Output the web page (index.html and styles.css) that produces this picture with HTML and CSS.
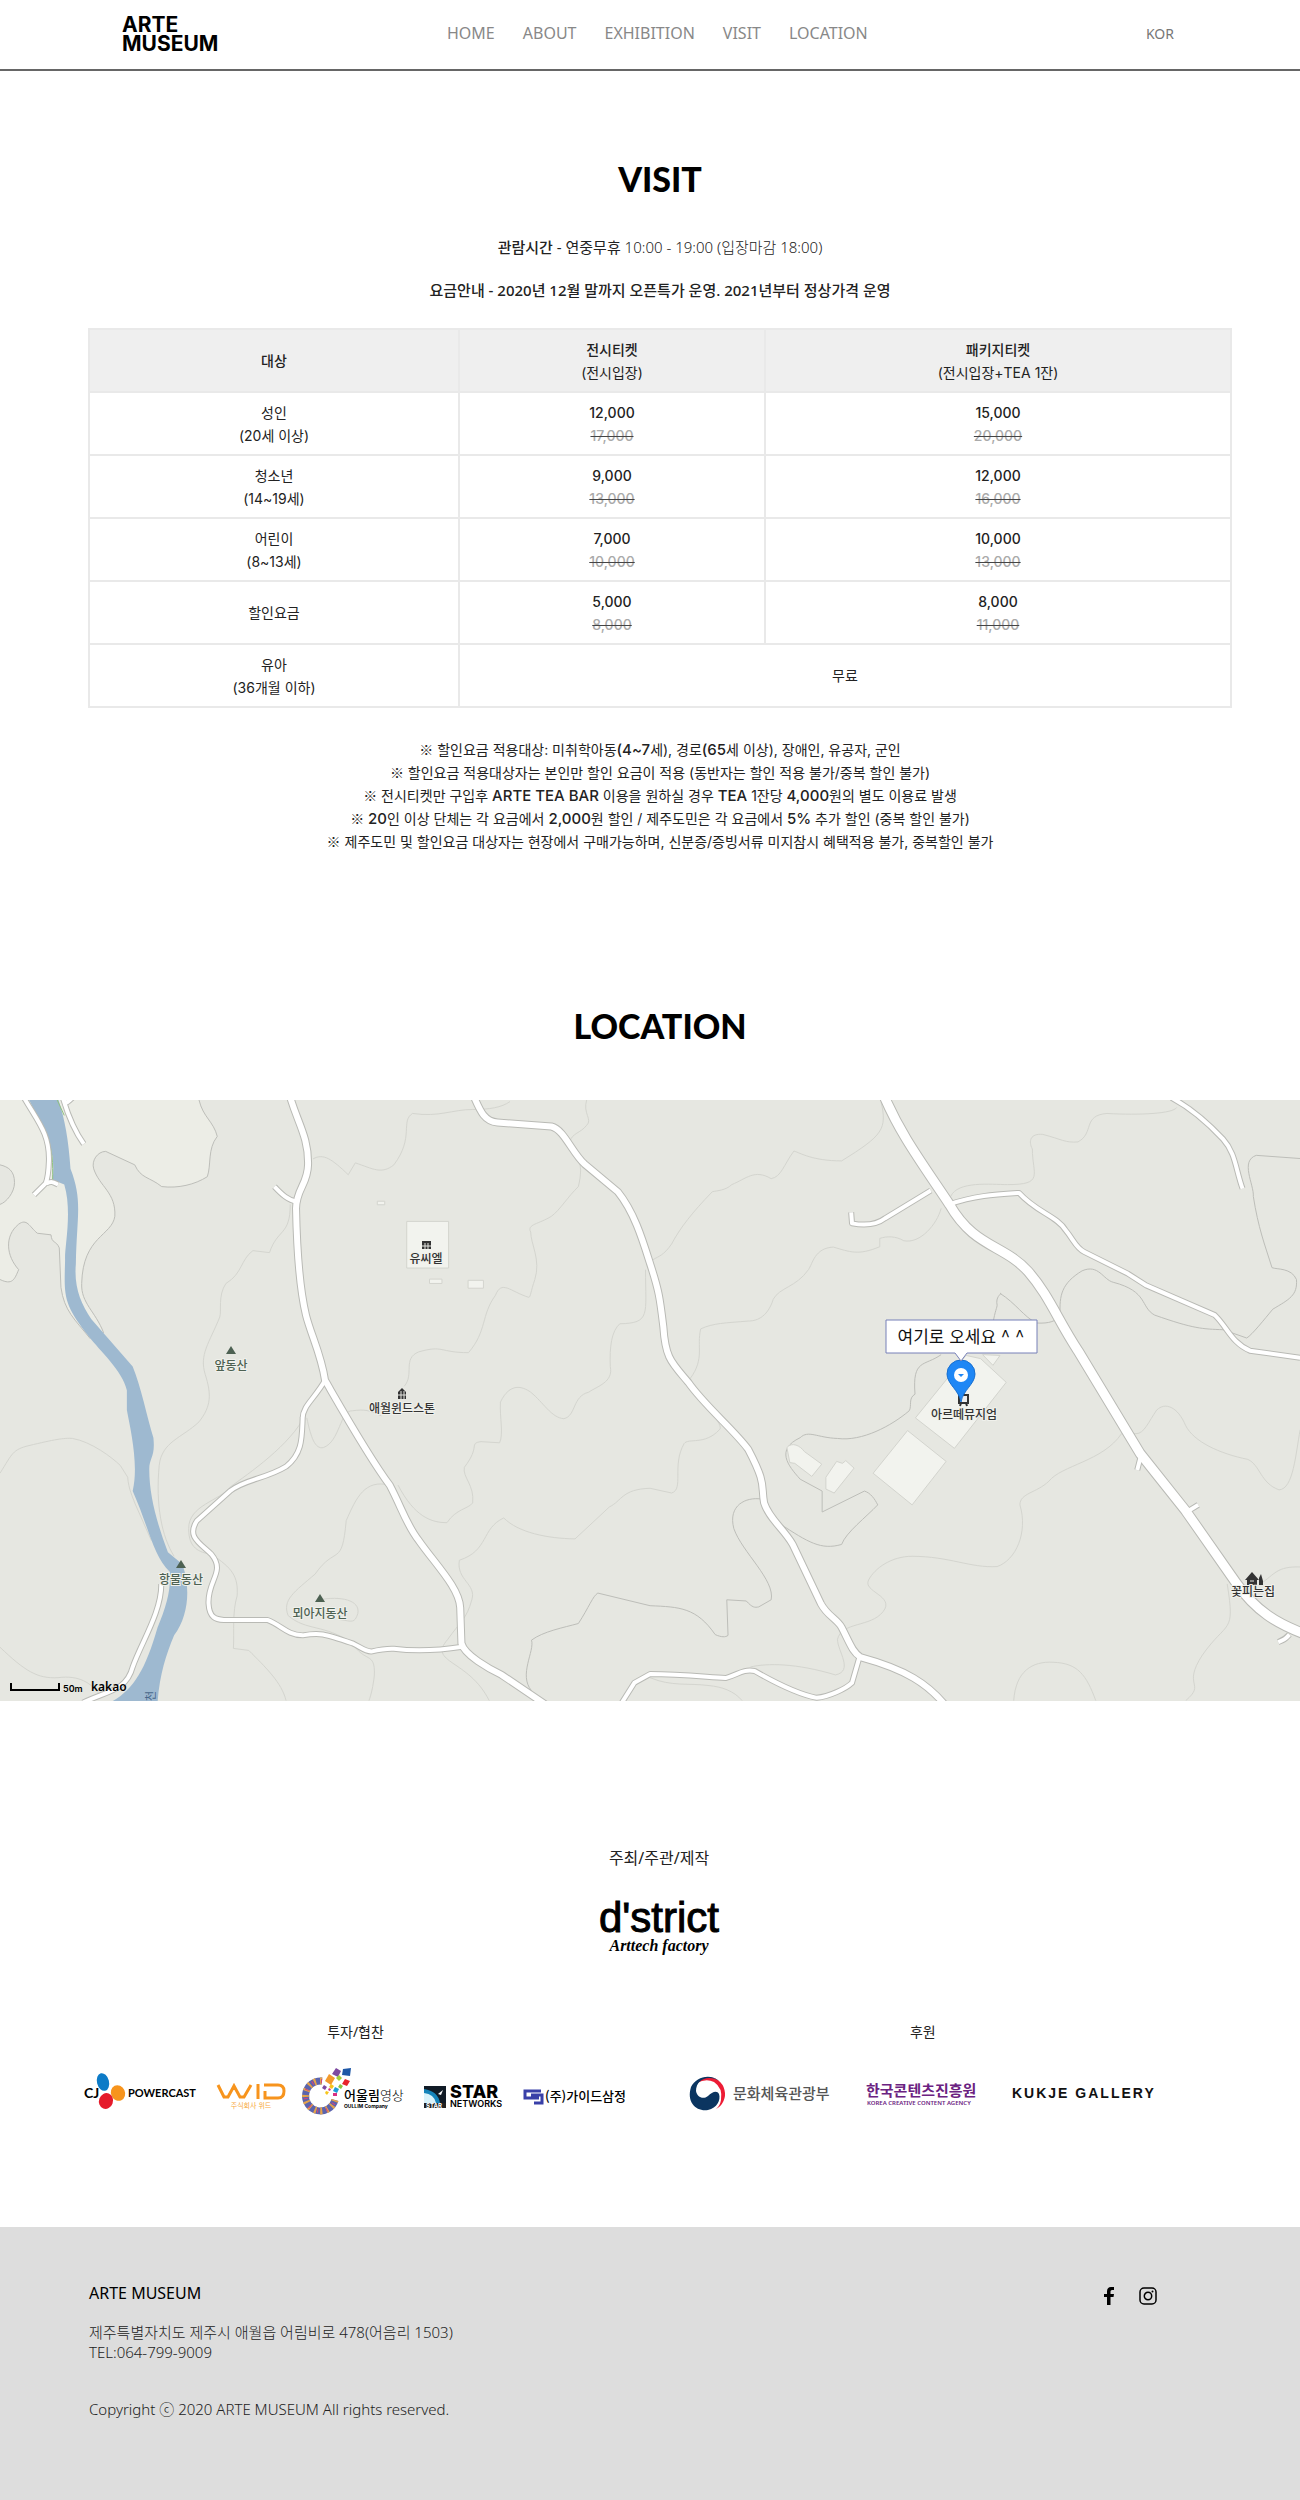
FILE: index.html
```html
<!DOCTYPE html>
<html lang="ko">
<head>
<meta charset="utf-8">
<meta name="viewport" content="width=device-width, initial-scale=1">
<title>ARTE MUSEUM</title>
<link rel="stylesheet" href="styles.css">
</head>
<body>
<header class="site-header">
  <a class="logo" href="#">ARTE<br>MUSEUM</a>
  <nav class="nav">
    <a href="#">HOME</a>
    <a href="#">ABOUT</a>
    <a href="#">EXHIBITION</a>
    <a href="#visit">VISIT</a>
    <a href="#location">LOCATION</a>
  </nav>
  <a class="lang" href="#">KOR</a>
</header>

<main>
  <section class="visit" id="visit">
    <h2 class="title">VISIT</h2>
    <p class="hours"><strong>관람시간</strong> - 연중무휴 <span class="light">10:00 - 19:00 (입장마감 18:00)</span></p>
    <p class="fee">요금안내 - 2020년 12월 말까지 오픈특가 운영. 2021년부터 정상가격 운영</p>
    <table class="prices">
      <colgroup><col class="col-who"><col class="col-ticket"><col></colgroup>
      <thead>
        <tr><th scope="col">대상</th><th scope="col">전시티켓<br><span class="sub">(전시입장)</span></th><th scope="col">패키지티켓<br><span class="sub">(전시입장+TEA 1잔)</span></th></tr>
      </thead>
      <tbody>
        <tr><td>성인<br>(20세 이상)</td><td>12,000<br><del>17,000</del></td><td>15,000<br><del>20,000</del></td></tr>
        <tr><td>청소년<br>(14~19세)</td><td>9,000<br><del>13,000</del></td><td>12,000<br><del>16,000</del></td></tr>
        <tr><td>어린이<br>(8~13세)</td><td>7,000<br><del>10,000</del></td><td>10,000<br><del>13,000</del></td></tr>
        <tr><td>할인요금</td><td>5,000<br><del>8,000</del></td><td>8,000<br><del>11,000</del></td></tr>
        <tr><td>유아<br>(36개월 이하)</td><td class="free" colspan="2">무료</td></tr>
      </tbody>
    </table>
    <div class="notes">
      <p><span class="mark">※</span> 할인요금 적용대상: 미취학아동<b>(4~7</b>세), 경로<b>(65</b>세 이상), 장애인, 유공자, 군인</p>
      <p><span class="mark">※</span> 할인요금 적용대상자는 본인만 할인 요금이 적용 (동반자는 할인 적용 불가/중복 할인 불가)</p>
      <p><span class="mark">※</span> 전시티켓만 구입후 <b>ARTE TEA BAR</b> 이용을 원하실 경우 <b>TEA</b> 1잔당 <b>4,000</b>원의 별도 이용료 발생</p>
      <p><span class="mark">※</span> <b>20</b>인 이상 단체는 각 요금에서 <b>2,000</b>원 할인 / 제주도민은 각 요금에서 <b>5%</b> 추가 할인 (중복 할인 불가)</p>
      <p><span class="mark">※</span> 제주도민 및 할인요금 대상자는 현장에서 구매가능하며, 신분증/증빙서류 미지참시 혜택적용 불가, 중복할인 불가</p>
    </div>
  </section>

  <section class="location" id="location">
    <h2 class="title">LOCATION</h2>
    <svg class="map" viewBox="0 0 1300 601" preserveAspectRatio="xMidYMid slice" role="img" aria-label="아르떼뮤지엄 지도">
      <defs>
        <g id="roads-wide">
          <path d="M695 0C712 75 745 115 743 190C742 240 715 250 714 300C716 400 722 500 738 570C750 620 775 670 784 735C820 800 890 930 940 1000C970 1060 980 1100 1010 1140C1050 1200 1108 1260 1110 1310L1113 1400C1120 1430 1180 1465 1210 1480L1330 1565"/>
          <path d="M1140 10C1160 60 1170 80 1200 83L1330 93C1360 100 1380 160 1410 188L1490 258C1530 310 1550 380 1568 440C1590 510 1592 530 1600 600C1605 680 1620 690 1660 740C1700 800 1770 860 1805 910C1850 1000 1835 1000 1843 1045C1855 1085 1890 1110 1912 1150L1980 1300C1995 1330 2020 1340 2030 1360C2050 1400 2055 1420 2075 1435C2180 1465 2240 1500 2290 1570"/>
        </g>
        <g id="roads-main">
          <path d="M2130 10C2170 110 2220 180 2290 290C2350 400 2420 390 2480 460C2530 520 2550 580 2600 660L2750 920L2860 1065L2980 1245C3030 1320 3080 1350 3150 1378"/>
        </g>
        <g id="roads-thin">
          <path d="M55 15C90 80 120 110 118 180C117 210 115 225 110 237L82 266M112 237C125 230 130 235 140 240"/>
          <path d="M150 15C165 70 180 105 202 137M152 35C160 35 165 30 175 20"/>
          <path d="M662 245C680 265 695 280 716 283"/>
          <path d="M784 735C760 780 730 800 730 830C728 880 730 920 690 953C640 985 590 985 555 1015L475 1090C450 1130 480 1145 510 1175C545 1220 500 1240 503 1300C505 1335 520 1340 540 1341H645C680 1355 690 1378 730 1380C770 1372 780 1375 850 1400C870 1410 880 1420 895 1421C920 1415 930 1413 950 1414C1010 1422 1060 1418 1115 1409"/>
          <path d="M389 1250C390 1320 340 1400 320 1460C305 1520 260 1520 200 1550"/>
          <path d="M1500 1550L1530 1500L1568 1478C1640 1478 1700 1485 1750 1488C1780 1480 1790 1465 1820 1470C1870 1500 1930 1530 1970 1538C2000 1535 2040 1515 2055 1500L2073 1435"/>
          <path d="M2245 255L2135 325C2110 345 2080 343 2055 338L2053 310"/>
          <path d="M2290 290C2350 268 2400 265 2458 261C2500 310 2550 320 2570 355C2590 380 2595 400 2615 410L2720 465L2765 495L2930 570C2960 600 2970 640 3015 660L3136 678"/>
          <path d="M2825 20C2870 45 2910 80 2950 125C2980 160 2980 200 2997 250"/>
          <path d="M2752 925L2743 962M2862 1068L2890 1050M3110 1378C3100 1390 3095 1392 3083 1397"/>
        </g>
      </defs>
      <rect class="land" width="1300" height="601"/>
      <g transform="scale(.4146 .3954) translate(0 -26)">
        <path class="field" d="M0 26H480C490 70 515 80 524 118C500 150 510 190 500 220C470 240 430 250 390 245C360 220 340 225 325 190L255 156C235 156 220 180 226 200C240 245 280 260 277 320C270 370 200 370 197 490C195 540 230 560 250 615L300 690L220 630C180 580 155 560 147 500L143 400C135 380 125 390 123 367L90 363C70 345 65 325 45 340C10 370 15 420 45 455C35 480 30 495 0 480V290C15 285 35 260 35 235C35 205 20 195 0 190Z"/>
        <g class="edge">
          <path d="M480 26C490 70 515 80 524 118C500 150 510 190 500 220C470 240 430 250 390 245C360 220 340 225 325 190L255 156C235 156 220 180 226 200C240 245 280 260 277 320C270 370 200 370 197 490C195 540 230 560 250 615M218 630C180 580 155 560 147 500L143 400C135 380 125 390 123 367L90 363C70 345 65 325 45 340C10 370 15 420 45 455C35 480 30 495 0 480M0 290C15 285 35 260 35 235C35 205 20 195 0 190"/>
          <path d="M1282 1520C1250 1480 1290 1420 1282 1392C1310 1370 1360 1360 1395 1350C1420 1310 1430 1280 1442 1273L1568 1305C1640 1308 1680 1310 1725 1378C1740 1385 1750 1385 1756 1380L1753 1290L1800 1293C1815 1310 1820 1310 1830 1308L1860 1290C1870 1240 1790 1170 1770 1110C1755 1050 1800 1030 1835 1035"/>
          <path d="M2395 590C2400 560 2405 550 2405 545C2400 520 2420 515 2412 515C2450 540 2470 575 2500 590C2530 592 2550 585 2557 570C2555 520 2560 490 2610 458C2650 440 2660 480 2685 487C2770 510 2750 550 2785 570C2880 605 2900 605 2950 607L3007 628C3020 620 3050 580 3070 555C3110 530 3130 520 3127 480C3115 450 3080 455 3068 450C3050 390 3035 350 3023 270C3025 240 2990 180 3030 166L3136 174"/>
          <path d="M2270 670C2230 700 2200 680 2207 770C2190 780 2200 800 2193 812C2150 850 2080 890 2020 882C1970 880 1950 860 1930 880C1870 910 1900 950 1930 985L1983 1015V1068L2085 1015C2100 1020 2110 1035 2117 1050C2090 1080 2040 1120 2030 1150C1980 1165 1950 1145 1880 1097"/>
        </g>
        <g class="contour">
          <path d="M755 175C780 160 800 175 840 215L857 185C900 200 920 215 950 190C1000 120 965 80 995 60C1060 70 1090 50 1140 50C1180 50 1210 45 1230 30M1415 26C1405 60 1430 75 1415 90C1400 110 1380 110 1375 130C1390 170 1410 180 1395 245C1370 270 1350 305 1330 320C1300 340 1270 340 1280 360C1280 390 1305 430 1290 480C1280 510 1280 525 1275 525C1230 510 1210 480 1195 520C1160 570 1175 610 1130 665C1060 665 1070 645 1010 663C970 680 1000 720 975 750"/>
          <path d="M700 290C700 370 670 350 650 412L610 407C580 430 585 465 545 490C525 520 535 560 530 575C505 640 480 670 495 720C510 770 510 800 480 840C440 880 390 890 384 950C375 1050 390 1130 420 1180M738 820C700 900 600 970 555 1005C530 1040 455 1050 455 1110C455 1160 480 1170 510 1175C560 1210 575 1230 572 1280C560 1320 565 1370 563 1413L600 1418C640 1460 680 1500 690 1545"/>
          <path d="M740 830C750 880 760 910 780 905C820 890 820 810 850 812C880 808 890 810 920 825M960 1000C1000 1080 1040 1095 1078 1095C1100 1060 1130 1060 1140 1045C1145 1000 1115 980 1120 955C1160 900 1130 895 1160 890L1205 893C1215 870 1205 830 1207 790C1230 740 1260 750 1280 765C1310 790 1330 830 1360 832C1390 825 1380 775 1420 765C1440 750 1480 740 1472 700C1470 650 1475 610 1495 592C1570 590 1557 570 1557 455"/>
          <path d="M0 970C30 920 30 910 70 900C130 885 155 880 175 882C220 890 270 930 290 950L308 980C310 1010 320 1030 325 1045L365 1140M0 1410C60 1470 90 1490 140 1487C190 1480 220 1500 240 1530"/>
          <path d="M940 1000C880 985 860 1030 835 1090C825 1210 810 1150 760 1225C710 1270 680 1290 695 1330C740 1370 780 1350 850 1400C880 1450 905 1420 903 1480C900 1510 895 1530 890 1545M770 1290C820 1280 870 1290 863 1325C855 1350 850 1345 820 1340"/>
          <path d="M1568 1008C1500 1010 1500 1040 1470 1055L1387 1136C1320 1135 1250 1120 1215 1083C1160 1110 1180 1165 1108 1190C1100 1240 1150 1250 1138 1290C1125 1340 1110 1345 1080 1390C1030 1450 1130 1440 1180 1545"/>
          <path d="M2125 30C2140 100 2130 115 2030 180C1960 180 1930 160 1915 155C1890 190 1885 220 1860 225C1820 200 1800 225 1765 240C1750 255 1730 255 1718 258C1670 310 1640 350 1620 390C1600 420 1590 420 1575 430M2270 300C2260 340 2220 390 2180 382C2160 370 2140 370 2122 376V397C2070 420 2050 410 2010 398C1965 400 1960 440 1950 455C1920 500 1880 500 1865 530C1850 580 1820 585 1805 585C1750 590 1720 590 1690 605C1680 650 1700 680 1665 730C1690 790 1750 850 1735 860C1700 900 1660 880 1650 895C1620 950 1650 1010 1620 1020L1568 1008"/>
          <path d="M2293 270C2310 230 2390 240 2430 240C2520 240 2490 215 2490 150C2480 130 2485 110 2515 113C2560 125 2570 135 2600 132C2640 110 2610 65 2670 60C2750 65 2830 60 2838 45"/>
          <path d="M3136 860C3125 920 3120 1010 3085 1012C3040 995 3040 950 3010 935C2940 920 2880 890 2860 850C2840 800 2810 790 2790 810C2770 840 2760 870 2740 870L2705 870C2660 940 2560 950 2530 990C2500 1020 2460 1020 2460 1050C2480 1120 2450 1190 2405 1206C2340 1210 2290 1180 2200 1180C2150 1180 2110 1210 2095 1240C2080 1270 2160 1280 2130 1320C2100 1360 2030 1345 2020 1390C2020 1420 2060 1470 2015 1480C1920 1450 1850 1450 1810 1460M3136 1207C3080 1205 3075 1225 3040 1250M2960 1250C2980 1380 2960 1340 2900 1430C2850 1510 2910 1500 2860 1545M2445 1545C2450 1470 2490 1445 2540 1448C2600 1450 2620 1480 2643 1545M1568 1487C1620 1510 1660 1500 1710 1507C1740 1510 1770 1520 1790 1545"/>
        </g>
        <path class="water" d="M65 15H138C155 70 165 120 170 200C200 280 185 320 183 440C178 500 195 540 220 580L320 700C340 750 355 830 370 880C375 930 360 930 360 960C360 1030 380 1100 405 1170L440 1200C460 1260 455 1330 420 1380C400 1430 385 1480 380 1550H265C320 1520 350 1470 380 1360C400 1310 412 1270 410 1220C370 1180 360 1110 320 1015C335 950 315 860 306 810V760C295 710 240 660 215 625C150 540 155 520 157 430C155 400 175 310 155 240L127 228C130 190 130 160 110 110Z"/>
        <path class="bank" d="M63 22L105 100C130 150 127 190 127 228M138 26L155 65"/>
        <g class="building">
          <path d="M981 333H1082V451H981ZM910 282H928V291H910ZM1036 479H1066V490H1036ZM1129 482H1166V502H1129ZM2365 680L2427 740L2302 907L2208 830L2330 672ZM2189 862L2282 940L2200 1050L2106 970ZM2370 670L2395 697L2412 672ZM1898 905C1910 890 1930 900 1940 915L1982 947L1958 978L1917 945L1905 943ZM1992 980L2018 940L2032 945L2040 938L2060 957L2012 1020L1992 1010Z"/>
        </g>
        <use class="casing thin" href="#roads-thin"/>
        <use class="casing wide" href="#roads-wide"/>
        <use class="casing main" href="#roads-main"/>
        <use class="road thin" href="#roads-thin"/>
        <use class="road wide" href="#roads-wide"/>
        <use class="road main" href="#roads-main"/>
      </g>
      <g class="hill">
        <path d="M231 246l-5 8h10ZM181 460l-5 8h10ZM320 494l-5 8h10Z"/>
        <text x="231" y="270">앞동산</text>
        <text x="181" y="484">항물동산</text>
        <text x="320" y="518">뫼아지동산</text>
      </g>
      <g class="place">
        <path d="M422 141h9v8h-9ZM398 299v-7l4-4l4 4v7ZM1245 480l7-8l7 8h-2v5h-10v-5ZM1259 485v-7l2-4l2 7v4Z"/>
        <path class="panes" d="M425 143v6M428 143v6M422 146h9M401 291v8M404 291v8M398 295h8M1250 481h4"/>
        <text x="426" y="163">유씨엘</text>
        <text x="402" y="313">애월윈드스톤</text>
        <text x="964" y="319">아르떼뮤지엄</text>
        <text x="1253" y="496">꽃피는집</text>
      </g>
      <path class="museum-icon" d="M959 295h9v8h-9ZM961 303l-1 3M966 303l1 3"/>
      <path class="pin" d="M961 302C959 290 947 284 947 274A14 14 0 0 1 975 274C975 284 963 290 961 302Z"/>
      <circle class="pin-hole" cx="961" cy="275" r="7"/>
      <path class="pin-mark" d="M958 274h6l-3 3Z"/>
      <path class="callout" d="M886 220H1037V253H967L961 261L955 253H886Z"/>
      <text class="callout-text" x="961" y="243">여기로 오세요 ^ ^</text>
      <path class="scale" d="M11 583V590H59V583"/>
      <text class="scale-text" x="63" y="592">50m</text>
      <text class="kakao" x="91" y="591">kakao</text>
      <text class="stream" x="155" y="601" transform="rotate(-90 155 601)">천</text>
    </svg>
  </section>

  <section class="partners">
    <p class="host-label">주최/주관/제작</p>
    <p class="host-name">d'strict</p>
    <p class="host-script">Arttech factory</p>
    <div class="partner-groups">
      <div class="group">
        <h3>투자/협찬</h3>
        <div class="logos logos-invest">
          <svg width="112" height="44" role="img" aria-label="CJ POWERCAST">
            <ellipse cx="18" cy="15" rx="6" ry="9" fill="#0d7bc7" transform="rotate(-14 18 15)"/>
            <ellipse cx="33" cy="26" rx="7" ry="8" fill="#f7941d" transform="rotate(-25 33 26)"/>
            <ellipse cx="21" cy="34" rx="7" ry="8" fill="#e51b2b" transform="rotate(20 21 34)"/>
            <text class="cj" x="-1" y="31">CJ</text><text class="powercast" x="43" y="30">POWERCAST</text>
          </svg>
          <svg width="68" height="44" role="img" aria-label="WID 주식회사 위드">
            <path d="M1 18L7 30H11L17 19L23 30H27L34 18M41 17V32M47 18H61Q67 18 67 24Q67 31 61 31H48V24" fill="none" stroke="#f7941d" stroke-width="3"/>
            <text class="wid" x="34" y="41">주식회사 위드</text>
          </svg>
          <svg width="99" height="44" role="img" aria-label="어울림영상">
            <path d="M17 14A15 15 0 1 0 30 33" fill="none" stroke="#5b64ad" stroke-width="7"/>
            <path d="M17 14A15 15 0 1 0 30 33" fill="none" stroke="#e5a34a" stroke-width="7" stroke-dasharray="2 4"/>
            <path d="M17 14A15 15 0 1 0 30 33" fill="none" stroke="#d2437c" stroke-width="4" stroke-dasharray="1 8"/>
            <path d="M24 7l6 4l-4 7l-6-4Z" fill="#f39a2c"/><path d="M31 1l5 3l-3 6l-6-3Z" fill="#7d4aa0"/><path d="M38 2l8-1l-1 8l-8-1Z" fill="#1f58a7"/><path d="M34 8l3 3l-3 3l-3-3Z" fill="#a4ce39"/><path d="M40 12l5 2l-3 5l-5-2Z" fill="#e8242c"/><path d="M19 18l3 2l-2 3l-3-2Z" fill="#7d4aa0"/><path d="M26 17l3 2l-2 3l-3-2ZM21 24l3 1l-2 3l-2-2Z" fill="#f6c51c"/><path d="M30 20l4 2l-2 4l-4-2Z" fill="#1b9dd9"/><path d="M35 17l3 2l-2 3l-3-2Z" fill="#8bc53f"/><path d="M24 21l2 1l-1 2l-2-1ZM28 26h4v3h-4Z" fill="#d83083"/>
            <text class="oullim" x="39" y="33">어울림<tspan class="thin-text">영상</tspan></text><text class="tiny" x="39" y="41">OULLIM Company</text>
          </svg>
          <svg width="79" height="44" role="img" aria-label="STAR NETWORKS">
            <rect y="19" width="22" height="22" fill="#111b26"/><path d="M0 22Q14 24 16 36H0Z" fill="#1684ba"/><path d="M0 26Q10 27 12 36H0Z" fill="#d9f2fa"/><path d="M14 27l5-4l-2 5Z" fill="#fff"/><rect y="36" width="22" height="5" fill="#222"/><text class="star-mini" x="2" y="41">STAR</text>
            <text class="star" x="26" y="31">STAR</text><text class="networks" x="26" y="40">NETWORKS</text>
          </svg>
          <svg width="103" height="44" role="img" aria-label="(주)가이드삼정">
            <path d="M18 24H2V31H16M8 28H19V36H11" fill="none" stroke="#3940a8" stroke-width="3"/>
            <text class="guide" x="22" y="34">(주)가이드삼정</text>
          </svg>
        </div>
      </div>
      <div class="group">
        <h3>후원</h3>
        <div class="logos logos-support">
          <svg width="142" height="44" role="img" aria-label="문화체육관광부">
            <path d="M26 42A17 17 0 0 0 18 10Q11 10 7 16Q16 11 24 15Q33 21 31 33Q30 39 26 42Z" fill="#ed1c35"/>
            <path d="M29 14C20 6 6 10 1 20C-4 36 7 45 18 43C27 41 31 33 29 27C27 23 22 25 18 29C13 33 7 30 6 24C6 16 12 11 19 11Q25 11 29 14Z" fill="#0b3560"/>
            <text class="mcst" x="43" y="32">문화체육관광부</text>
          </svg>
          <svg width="112" height="44" role="img" aria-label="한국콘텐츠진흥원">
            <text class="kocca" x="0" y="29">한국콘텐츠진흥원</text><text class="kocca-sub" x="1" y="38">KOREA CREATIVE CONTENT AGENCY</text>
          </svg>
          <span class="kukje">KUKJE GALLERY</span>
        </div>
      </div>
    </div>
  </section>
</main>

<footer class="site-footer">
  <div>
    <p class="company">ARTE MUSEUM</p>
    <address>제주특별자치도 제주시 애월읍 어림비로 478(어음리 1503)<br>TEL:064-799-9009</address>
    <p class="copyright">Copyright ⓒ 2020 ARTE MUSEUM All rights reserved.</p>
  </div>
  <div class="social">
    <a href="#" aria-label="Facebook"><svg width="10" height="18" viewBox="0 0 10 18"><path d="M3 18V10H0V7H3V4.500Q3 0 7 0H10V3H8Q6.500 3 6.500 4.500V7H10L9.500 10H6.500V18Z"/></svg></a>
    <a href="#" aria-label="Instagram"><svg width="18" height="18" viewBox="0 0 18 18"><rect x="1" y="1" width="16" height="16" rx="4" fill="none" stroke="#000" stroke-width="1.500"/><circle cx="9" cy="9" r="3.700" fill="none" stroke="#000" stroke-width="1.500"/><circle cx="13.500" cy="4.500" r="1"/></svg></a>
  </div>
</footer>
</body>
</html>
```
FILE: styles.css
```css
* { box-sizing: border-box; }
body {
  margin: 0;
  background: #fff;
  color: #222;
  font: 15px/23px "Noto Sans", "Noto Sans CJK KR", sans-serif;
}
h2, h3, p { margin: 0; }
a { color: inherit; text-decoration: none; }

.site-header {
  display: grid;
  grid-template-columns: 325px 1fr auto;
  align-items: center;
  height: 71px;
  padding: 0 126px 2px 122px;
  border-bottom: 2px solid #666;
}
.logo {
  color: #000;
  font: 700 21px/19px Inter, sans-serif;
}
.nav {
  display: flex;
  gap: 28px;
  color: #888;
  font-size: 16px;
}
.lang { color: #777; font-size: 14px; }

.title {
  color: #000;
  font: 900 34px/40px Lato, sans-serif;
}
.visit {
  padding: 88px 68px 0 88px;
  text-align: center;
}
.hours, .fee { line-height: 24px; }
.hours { margin-top: 36px; }
.hours strong, .fee { font-weight: 500; }
.light { font-weight: 300; }
.fee { margin-top: 19px; }

.prices {
  width: 100%;
  margin-top: 26px;
  border-collapse: collapse;
  table-layout: fixed;
  font-family: Inter, "Noto Sans CJK KR", sans-serif;
  font-size: 14px;
  font-weight: 500;
}
.col-who { width: 370px; }
.col-ticket { width: 306px; }
.prices th, .prices td {
  height: 63px;
  padding: 7px 8px;
  border: 2px solid #e9e9e9;
}
.prices th { background: #efefef; font-weight: 500; }
.prices td:first-child, .prices .free, .prices .sub { font-weight: 400; }
.prices del { color: #aaa; text-decoration-color: #444; }
.notes {
  margin-top: 30px;
  font-family: Inter, "Noto Sans CJK KR", sans-serif;
  font-size: 14px;
}
.notes b { font-size: 15px; font-weight: 500; }
.mark { font-family: "Noto Sans CJK KR", sans-serif; }

.location { padding-top: 153px; }
.location .title { padding-left: 20px; text-align: center; }
.map {
  display: block;
  width: 100%;
  height: 601px;
  margin-top: 54px;
}
.map path { vector-effect: non-scaling-stroke; }
.land { fill: #e6e7e1; }
.field { fill: #ecede6; }
.edge { fill: none; stroke: #bdbeb9; }
.contour { fill: none; stroke: #d4d5cf; }
.water { fill: #9eb9d0; }
.bank { fill: none; stroke: #8fc080; }
.building { fill: #f2f3ee; stroke: #d3d4ce; }
.casing, .road { fill: none; stroke-linejoin: round; }
.casing { stroke: #b9bab5; }
.road { stroke: #fff; }
.casing.thin { stroke-width: 6px; }
.casing.wide { stroke-width: 8px; }
.casing.main { stroke-width: 11px; }
.road.thin { stroke-width: 4px; }
.road.wide { stroke-width: 6px; }
.road.main { stroke-width: 9px; }
.map text { font-family: "Noto Sans CJK KR", sans-serif; }
.hill, .place {
  font-size: 12px;
  text-anchor: middle;
}
.hill { fill: #4d6152; font-weight: 500; }
.place { fill: #333; font-weight: 500; }
.hill text, .place text { stroke: #f0f1ec; stroke-width: 2px; paint-order: stroke; }
.panes { stroke: #e6e7e1; }
.museum-icon { fill: #eee; stroke: #333; stroke-width: 2px; }
.pin { fill: #1f87f5; stroke: #176fd0; }
.pin-hole { fill: #fff; }
.pin-mark { fill: #1f87f5; }
.callout { fill: #fff; stroke: #7680b8; }
.callout-text { fill: #111; font-size: 17px; text-anchor: middle; }
.scale { fill: none; stroke: #000; stroke-width: 2px; }
.map .scale-text { font: 600 9px Inter, sans-serif; }
.map .kakao { font: 600 12px "Noto Sans", sans-serif; }
.stream { fill: #48678a; font-size: 11px; }

.partners { padding: 144px 0 116px; }
.host-label, .host-name, .host-script { padding-left: 18px; text-align: center; }
.host-label { font-size: 16px; line-height: 26px; }
.host-name {
  margin-top: 27px;
  color: #000;
  font: 42px/40px "Liberation Sans", sans-serif;
  -webkit-text-stroke: 1px #000;
}
.host-script {
  color: #000;
  font: italic 700 16px/16px "Liberation Serif", serif;
}
.partner-groups {
  display: flex;
  gap: 64px;
  margin-top: 66px;
  padding-left: 85px;
}
.group h3 {
  font-size: 14px;
  font-weight: 400;
  line-height: 24px;
  text-align: center;
}
.logos { display: flex; height: 44px; margin-top: 23px; }
.logos svg { flex: none; overflow: visible; font-family: "Noto Sans CJK KR", sans-serif; }
.logos-invest { gap: 20px; }
.logos-support { gap: 34px; }
.cj { font: 700 14px Lato, sans-serif; }
.powercast { font: 700 11px Lato, sans-serif; }
.wid { fill: #f7a940; font-size: 7px; text-anchor: middle; }
.oullim { font-size: 13px; font-weight: 500; }
.thin-text { font-weight: 300; }
.tiny { font: 700 5px Inter, sans-serif; }
.star-mini { fill: #fff; font: 700 6px Inter, sans-serif; }
.star { font: 800 18px Inter, sans-serif; }
.networks { font: 600 9px Inter, sans-serif; }
.guide { font-size: 13px; font-weight: 500; }
.mcst { fill: #555; font-size: 15px; font-weight: 500; }
.kocca { fill: #6b2281; font-size: 15px; font-weight: 700; }
.kocca-sub { fill: #6b2281; font: 600 6px "Noto Sans", sans-serif; }
.kukje {
  align-self: center;
  padding-top: 8px;
  color: #111;
  font: 700 14px/20px "Liberation Sans", sans-serif;
  letter-spacing: 2px;
  white-space: nowrap;
}

.site-footer {
  display: flex;
  justify-content: space-between;
  min-height: 273px;
  padding: 54px 143px 54px 89px;
  background: #ddd;
  color: #222;
  font-weight: 300;
}
.company { color: #000; font-size: 16px; font-weight: 400; line-height: 24px; }
address { margin-top: 17px; font-style: normal; line-height: 20px; }
.copyright { margin-top: 35px; line-height: 24px; }
.social { display: flex; gap: 25px; padding-top: 6px; }
.social svg { display: block; }
```
